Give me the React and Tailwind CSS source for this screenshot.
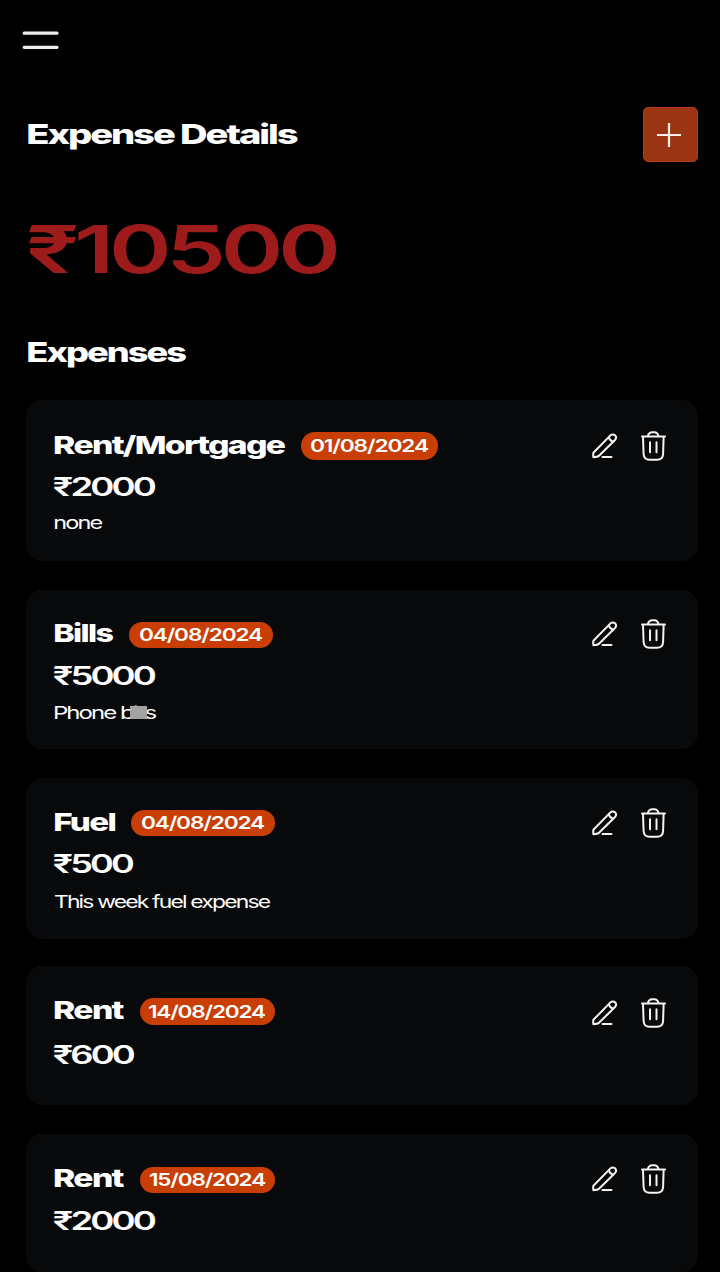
import { useLayoutEffect, useRef, useState } from "react";

// Extended lettering: stretches a line of text so that its ink spans `width` pixels.
// The text is measured at ten times its size, which keeps fractions of a pixel.
function Wide({ text, width, className = "" }) {
  const ref = useRef(null);
  const [transform, setTransform] = useState("none");
  useLayoutEffect(() => {
    const style = getComputedStyle(ref.current);
    const ctx = document.createElement("canvas").getContext("2d");
    ctx.font = `${style.fontWeight} ${parseFloat(style.fontSize) * 10}px ${style.fontFamily}`;
    ctx.letterSpacing = `${(parseFloat(style.letterSpacing) || 0) * 10}px`;
    const m = ctx.measureText(text);
    const left = m.actualBoundingBoxLeft / 10;
    const scale = width / (m.actualBoundingBoxRight / 10 + left);
    setTransform(`translateX(${left * scale}px) scaleX(${scale})`);
  }, [text, width]);
  return (
    <span className="block shrink-0" style={{ width }}>
      <span ref={ref} className={`inline-block origin-left whitespace-nowrap ${className}`} style={{ transform }}>
        {text}
      </span>
    </span>
  );
}

function PencilIcon() {
  return (
    <svg className="h-[26px] w-[26px]" viewBox="0 0 26 26" fill="none" stroke="#f4f4f4" strokeWidth="2" strokeLinecap="round" strokeLinejoin="round">
      <path d="M1.4 19.8 18.2 2.6Q20.8 .4 23 2.3Q25.2 4.4 23 7L7 22.8Q5.6 24.2 1.4 24.2Q1 22 1.4 19.8Z" />
      <path d="M16.9 4.4Q17.6 7.6 21 8.6M10.5 23.9H19.5" />
    </svg>
  );
}

function TrashIcon() {
  return (
    <svg className="h-[30px] w-[25px]" viewBox="0 0 25 30" fill="none" stroke="#f4f4f4" strokeWidth="2" strokeLinecap="round" strokeLinejoin="round">
      <path d="M1 5.6H24M6.8 5.2Q7.8 1.3 11.3 1.3H13.2Q16.7 1.3 17.6 5.2" />
      <path d="M2 6 2.6 23Q3 28.8 8.5 28.8H16Q21.8 28.8 22.1 23L22.6 6" />
      <path d="M9 11.2V21.3M15.5 11.2V21.3" />
    </svg>
  );
}

const expenses = [
  { title: "Rent/Mortgage", titleW: 230, date: "01/08/2024", dateW: 117, badge: "w-[137px] h-[28px] mt-[2px]", amount: "₹2000", amountW: 101, note: "none", noteW: 47, card: "h-[161px] mt-0", pad: "pt-[29px]", amountGap: "mt-[10px]", noteGap: "mt-[7px]", icons: "mt-[-1px]" },
  { title: "Bills", titleW: 58, date: "04/08/2024", dateW: 122, badge: "w-[144px] h-[26px] mt-[3px]", amount: "₹5000", amountW: 101, note: "Phone bills", noteW: 101, smudge: true, card: "h-[159px] mt-[29px]", pad: "pt-[27px]", amountGap: "mt-[11px]", noteGap: "mt-2", icons: "mt-[-1px]" },
  { title: "Fuel", titleW: 60, date: "04/08/2024", dateW: 122, badge: "w-[144px] h-[26px] mt-[2px]", amount: "₹500", amountW: 79, note: "This week fuel expense", noteW: 215, card: "h-[161px] mt-[29px]", pad: "pt-[28px]", amountGap: "mt-[10px]", noteGap: "mt-[9px]", icons: "mt-[-1px]" },
  { title: "Rent", titleW: 69, date: "14/08/2024", dateW: 116, badge: "w-[135px] h-[27px] mt-[3px]", amount: "₹600", amountW: 80, card: "h-[139px] mt-[27px]", pad: "pt-[28px]", amountGap: "mt-[13px]", icons: "mt-[1px]" },
  { title: "Rent", titleW: 69, date: "15/08/2024", dateW: 115, badge: "w-[135px] h-[26px] mt-[3px]", amount: "₹2000", amountW: 101, card: "h-[138px] mt-[29px]", pad: "pt-[28px]", amountGap: "mt-[11px]", icons: "mt-[-1px]" },
];

function ExpenseCard({ e }) {
  return (
    <article className={`flex items-start justify-between rounded-2xl bg-[#08090b] pl-[28.5px] pr-8 ${e.card} ${e.pad}`}>
      <div>
        <div className="flex h-8 items-center gap-4">
          <h3>
            <Wide text={e.title} width={e.titleW} className="text-[25px] leading-8 font-extrabold tracking-[-0.05em]" />
          </h3>
          <div className={`flex items-center justify-center rounded-full bg-[#c83e04] ${e.badge}`}>
            <Wide text={e.date} width={e.dateW} className="text-[17.5px] leading-[26px] font-semibold tracking-[-0.05em]" />
          </div>
        </div>
        <div className={`-ml-[0.5px] h-8 ${e.amountGap}`}>
          <Wide text={e.amount} width={e.amountW} className="text-[25px] leading-8 font-semibold tracking-[-0.08em]" />
        </div>
        {e.note && (
          <div className={`relative h-[26px] ${e.noteGap}`}>
            <Wide text={e.note} width={e.noteW} className="text-[17.5px] leading-[26px] font-normal tracking-[-0.08em]" />
            {e.smudge && <span className="absolute top-[6px] left-[75px] h-[13px] w-[17px] bg-[#a3a3a3]" />}
          </div>
        )}
      </div>
      <div className={`flex h-9 items-center gap-[23px] ${e.icons}`}>
        <PencilIcon />
        <TrashIcon />
      </div>
    </article>
  );
}

export default function App() {
  return (
    <main className="h-[1272px] w-full overflow-hidden bg-black pr-[22px] pl-[26px] font-['Inter',sans-serif] text-white">
      <nav className="-ml-1 flex h-[107px] items-start pt-[31px]">
        <svg className="h-[19px] w-[37px]" viewBox="0 0 37 19" stroke="#ededed" strokeWidth="3.2" strokeLinecap="round">
          <path d="M2.2 2.2H35M2.2 16.3H35" />
        </svg>
      </nav>
      <header className="flex h-[55px] items-center justify-between pl-[1.5px]">
        <h1>
          <Wide text="Expense Details" width={269.5} className="text-[27.5px] leading-[55px] font-extrabold tracking-[-0.055em]" />
        </h1>
        <button className="flex h-[55px] w-[55px] items-center justify-center rounded-[5px] border border-[#b33a10] bg-[#9a3412]">
          <svg className="mt-px mr-[3px] h-6 w-6" viewBox="0 0 24 24" stroke="#fff1ea" strokeWidth="2.2">
            <path d="M12 0V24M0 12H24" />
          </svg>
        </button>
      </header>
      <div className="mt-[47px] h-20 pl-[3px]">
        <Wide text="₹10500" width={307} className="text-[66px] leading-[80px] font-semibold tracking-[-0.055em] text-[#9e1b1b]" />
      </div>
      <h2 className="mt-[43px] mb-[28px] h-10 pl-[1.5px]">
        <Wide text="Expenses" width={158} className="text-[27.5px] leading-10 font-extrabold tracking-[-0.055em]" />
      </h2>
      <section>
        {expenses.map((e, i) => (
          <ExpenseCard key={i} e={e} />
        ))}
      </section>
    </main>
  );
}
